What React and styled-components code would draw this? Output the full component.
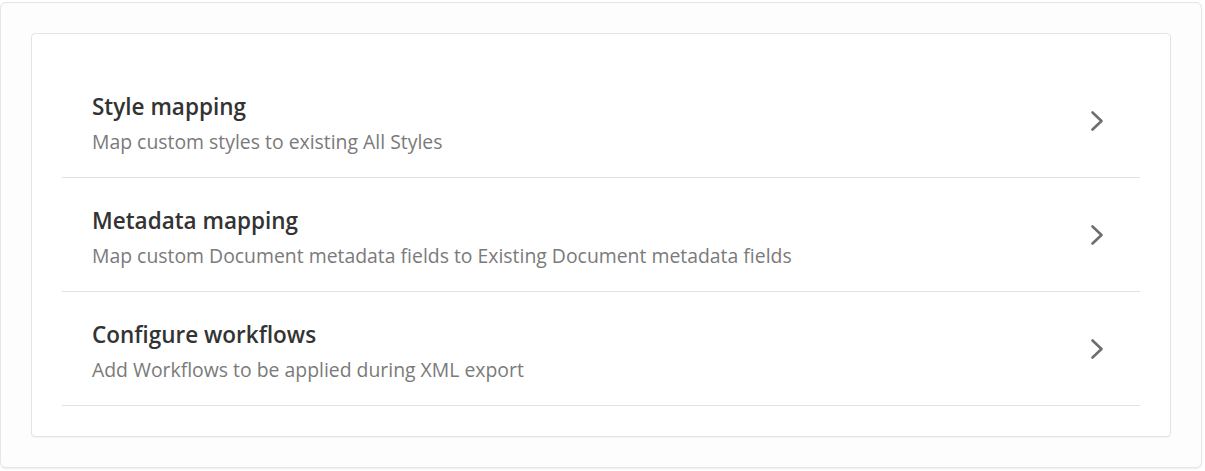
import React from "react";
import styled, { createGlobalStyle } from "styled-components";

const Global = createGlobalStyle`
  html, body { margin: 0; padding: 0; background: #ffffff; }
  body { font-family: "Open Sans", "Noto Sans", Arial, sans-serif; }
  #root { padding: 2px 3px 3px 0; }
`;

const Panel = styled.div`
  background: #fdfdfd;
  border: 1px solid #e6e6e6;
  border-radius: 6px;
  box-shadow: 0 1px 2px rgba(0, 0, 0, 0.08);
  padding: 30px;
`;

const Card = styled.div`
  background: #ffffff;
  border: 1px solid #e4e4e4;
  border-radius: 4px;
  box-shadow: 0 1px 1px rgba(0, 0, 0, 0.04);
  padding: 30px;
`;

const Row = styled.button`
  all: unset;
  box-sizing: border-box;
  width: 100%;
  height: 114px;
  display: flex;
  align-items: center;
  padding: 6px 30px 0;
  border-bottom: 1px solid #e3e3e3;
  cursor: pointer;
`;

const Texts = styled.div`
  flex: 1;
  display: flex;
  flex-direction: column;
  gap: 6px;
`;

const Title = styled.div`
  font-size: 22.5px;
  font-weight: 600;
  color: #333333;
  line-height: 30px;
`;

const Desc = styled.div`
  font-size: 19.4px;
  color: #7a7a7a;
  line-height: 28px;
`;

const Chevron = styled.svg`
  width: 14px;
  height: 22px;
  margin-right: 6px;
  margin-top: -6px;
  flex-shrink: 0;
`;

const items = [
  { title: "Style mapping", desc: "Map custom styles to existing All Styles" },
  { title: "Metadata mapping", desc: "Map custom Document metadata fields to Existing Document metadata fields" },
  { title: "Configure workflows", desc: "Add Workflows to be applied during XML export" },
];

export default function App() {
  return (
    <>
      <Global />
      <Panel>
        <Card>
          {items.map((it) => (
            <Row key={it.title}>
              <Texts>
                <Title>{it.title}</Title>
                <Desc>{it.desc}</Desc>
              </Texts>
              <Chevron viewBox="0 0 14 22" fill="none">
                <path d="M2.5 2.5 L11.5 11 L2.5 19.5" stroke="#6e6e6e" strokeWidth="2.6" strokeLinecap="round" strokeLinejoin="round" />
              </Chevron>
            </Row>
          ))}
        </Card>
      </Panel>
    </>
  );
}
